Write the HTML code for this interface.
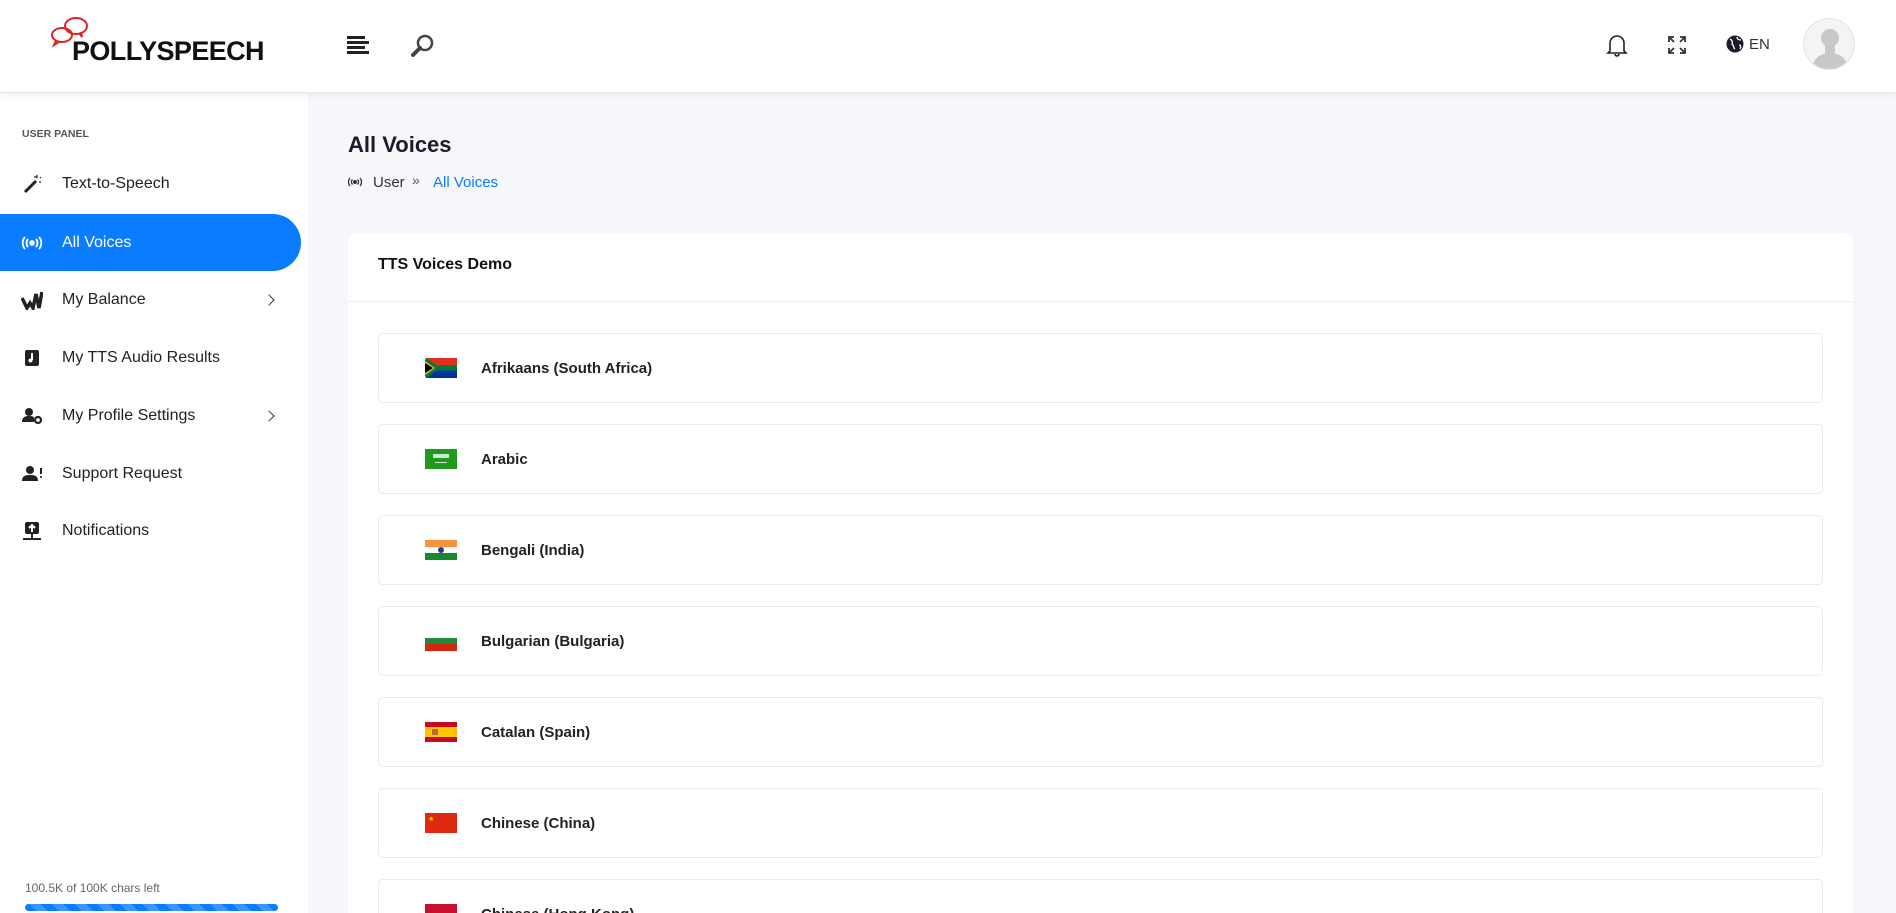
<!DOCTYPE html>
<html style="width:1896px;height:913px;overflow:hidden"><head><meta charset="utf-8"><style>
*{box-sizing:border-box;margin:0;padding:0}
body{width:1896px;height:913px;overflow:hidden;background:#f5f7fa;font-family:"Liberation Sans",sans-serif;color:#1b1b29;position:relative}
.hdr{position:absolute;left:0;top:0;width:1896px;height:92px;background:#fff;box-shadow:0 2px 6px rgba(0,0,0,.08);z-index:2}
.side{position:absolute;left:0;top:92px;width:308px;height:821px;background:#fff;border-top:1px solid #eee}
.abs{position:absolute}
.mi{position:absolute;left:0;width:301px;height:57px;display:flex;align-items:center;font-size:16px;color:#222}
.mi .ic{width:62px;display:flex;justify-content:center;padding-left:2px}
.mi.act{background:#0a7cff;color:#fff;border-radius:0 29px 29px 0}
.chev{position:absolute;right:28px;top:25px;width:8px;height:8px;border-right:1.6px solid #333;border-top:1.6px solid #333;transform:rotate(45deg)}
.card{position:absolute;left:348px;top:233px;width:1505px;height:680px;background:#fff;border-radius:8px 8px 0 0;overflow:hidden}
.it{position:absolute;left:30px;width:1445px;height:70px;border:1px solid #e8eaee;border-radius:5px;display:flex;align-items:center}
.it .fl{position:absolute;left:46px;top:24px;width:32px;height:20px;overflow:hidden}
.it span{position:absolute;left:102px;font-size:15px;font-weight:bold;color:#222}
</style></head><body>
<div class="hdr">
 <svg class="abs" style="left:50px;top:15px" width="40" height="34" viewBox="0 0 40 34" fill="none" stroke="#e02424" stroke-width="2"><ellipse cx="26" cy="11" rx="11" ry="8"/><path d="M29 18l3 4-1-5"/><ellipse cx="12" cy="20" rx="10" ry="7"/><path d="M6 26l-2 4 5-3"/></svg>
 <div class="abs" style="left:72px;top:36px;font-size:27px;font-weight:bold;letter-spacing:-0.6px;color:#111">POLLYSPEECH</div>
 <svg class="abs" style="left:347px;top:36px" width="22" height="18"><rect x="0" y="0" width="18" height="3" fill="#222"/><rect x="0" y="5" width="22" height="3" fill="#222"/><rect x="0" y="10" width="18" height="3" fill="#222"/><rect x="0" y="15" width="22" height="3" fill="#222"/></svg>
 <svg class="abs" style="left:410px;top:34px" width="24" height="24"><circle cx="15" cy="9" r="7" fill="none" stroke="#444" stroke-width="2.5"/><path d="M10 14L3 21" stroke="#444" stroke-width="4" stroke-linecap="round"/></svg>
 <svg class="abs" style="left:1606px;top:33px" width="22" height="24" fill="none" stroke="#222" stroke-width="1.6"><path d="M4 18V10a7 7 0 0 1 14 0v8l2 2H2z"/><path d="M9 21a2 2 0 0 0 4 0"/></svg>
 <svg class="abs" style="left:1667px;top:35px" width="20" height="20" fill="none" stroke="#333" stroke-width="1.8"><path d="M2 7V2h5M2 2l5 5M18 7V2h-5M18 2l-5 5M2 13v5h5M2 18l5-5M18 13v5h-5M18 18l-5-5"/></svg>
 <svg class="abs" style="left:1726px;top:35px" width="18" height="18"><circle cx="9" cy="9" r="8.5" fill="#1b1b29"/><path d="M4 4c2 1 3 3 2 5 2 1 1 4 3 5M11 2c0 2 2 3 4 3M13 10c2 0 2 2 1 4" stroke="#fff" stroke-width="1.3" fill="none"/></svg>
 <div class="abs" style="left:1749px;top:36px;font-size:15px;color:#333">EN</div>
 <div class="abs" style="left:1803px;top:18px;width:52px;height:52px;border-radius:50%;background:#f4f4f4;border:1px solid #e4e4e4;overflow:hidden"><svg width="52" height="52"><circle cx="26" cy="19" r="9" fill="#c6c8ca"/><path d="M8 52c0-12 8-18 18-18s18 6 18 18z" fill="#c6c8ca"/><rect x="21" y="24" width="10" height="12" fill="#c6c8ca"/></svg></div>
</div>
<div class="side">
 <div class="abs" style="left:22px;top:35px;font-size:10.5px;font-weight:bold;color:#555">USER PANEL</div>
 <div class="mi" style="top:62px"><div class="ic"><svg width="20" height="20"><path d="M3 18L14 7" stroke="#222" stroke-width="3"/><path d="M15 1v3M12 3h3M18 4l1-1M17 8h2" stroke="#222" stroke-width="1.2"/></svg></div>Text-to-Speech</div>
 <div class="mi act" style="top:121px"><div class="ic"><svg width="22" height="14" fill="none" stroke="#fff" stroke-width="1.8"><circle cx="11" cy="7" r="2" fill="#fff"/><path d="M7 3a6 6 0 0 0 0 8M15 3a6 6 0 0 1 0 8M4 1a9 9 0 0 0 0 12M18 1a9 9 0 0 1 0 12"/></svg></div>All Voices</div>
 <div class="mi" style="top:178px"><div class="ic"><svg width="22" height="20"><path d="M1 8l5 10 3-5 3 5 3-14 3 14 3-16" stroke="#222" stroke-width="3.5" fill="none"/></svg></div>My Balance<div class="chev"></div></div>
 <div class="mi" style="top:236px"><div class="ic"><svg width="16" height="18"><rect x="1" y="1" width="14" height="16" rx="2" fill="#222"/><path d="M8 4v7" stroke="#fff" stroke-width="2"/><circle cx="6.5" cy="11.5" r="2" fill="#fff"/></svg></div>My TTS Audio Results</div>
 <div class="mi" style="top:294px"><div class="ic"><svg width="22" height="18"><circle cx="8" cy="5" r="4" fill="#222"/><path d="M1 15c0-5 3-6 7-6s5 1 5 2v4z" fill="#222"/><circle cx="17" cy="13" r="3" fill="none" stroke="#222" stroke-width="2.2"/></svg></div>My Profile Settings<div class="chev"></div></div>
 <div class="mi" style="top:352px"><div class="ic"><svg width="22" height="16"><circle cx="9" cy="4" r="4" fill="#222"/><path d="M1 15c0-5 3-6 8-6s8 1 8 6z" fill="#222"/><path d="M20 2v6" stroke="#222" stroke-width="2"/><circle cx="20" cy="11" r="1" fill="#222"/></svg></div>Support Request</div>
 <div class="mi" style="top:409px"><div class="ic"><svg width="20" height="20"><rect x="3" y="1" width="14" height="12" rx="2" fill="#222"/><path d="M10 11V4M7 7l3-3 3 3" stroke="#fff" stroke-width="2" fill="none"/><path d="M10 13v4M1 18h18" stroke="#222" stroke-width="2"/></svg></div>Notifications</div>
 <div class="abs" style="left:25px;top:788px;font-size:12px;color:#666">100.5K of 100K chars left</div>
 <div class="abs" style="left:25px;top:811px;width:253px;height:7px;border-radius:4px;background:repeating-linear-gradient(45deg,#0a7cff 0 8px,#3a96ff 8px 16px)"></div>
</div>
<div class="abs" style="left:348px;top:132px;font-size:22px;font-weight:bold;color:#1b1b29">All Voices</div>
<svg class="abs" style="left:348px;top:177px" width="14" height="10" fill="none" stroke="#333" stroke-width="1.3"><circle cx="7" cy="5" r="1.3" fill="#333"/><path d="M4.5 2.5a3.5 3.5 0 0 0 0 5M9.5 2.5a3.5 3.5 0 0 1 0 5M2 1a6 6 0 0 0 0 8M12 1a6 6 0 0 1 0 8"/></svg>
<div class="abs" style="left:373px;top:174px;font-size:15px;color:#333">User</div>
<div class="abs" style="left:412px;top:172px;font-size:14px;color:#555">»</div>
<div class="abs" style="left:433px;top:174px;font-size:15px;color:#0a7cff">All Voices</div>
<div class="card">
 <div class="abs" style="left:30px;top:23px;font-size:16px;font-weight:bold;color:#111">TTS Voices Demo</div>
 <div class="abs" style="left:0;top:68px;width:1505px;height:1px;background:#eceef1"></div>
 <div class="it" style="top:100px"><div class="fl"><svg width="32" height="20"><rect width="32" height="10" fill="#e0301e"/><rect y="10" width="32" height="10" fill="#0033a0"/><path d="M0 0L14 10 0 20" fill="#fff"/><path d="M0 2L11 10 0 18M11 10H32" stroke="#007a3d" stroke-width="5" fill="none"/><path d="M0 3L10 10 0 17z" fill="#ffb612"/><path d="M0 5L8 10 0 15z" fill="#000"/></svg></div><span>Afrikaans (South Africa)</span></div>
 <div class="it" style="top:191px"><div class="fl" style="background:#1e9b1e"><div style="position:absolute;left:8px;top:5px;width:16px;height:4px;background:#cfe8cf"></div><div style="position:absolute;left:10px;top:13px;width:12px;height:1px;background:#cfe8cf"></div></div><span>Arabic</span></div>
 <div class="it" style="top:282px"><div class="fl"><div style="height:7px;background:#f7933c"></div><div style="height:6px;background:#fff;position:relative"><div style="position:absolute;left:13px;top:0;width:6px;height:6px;border-radius:50%;background:#233a8c"></div></div><div style="height:7px;background:#148a2c"></div></div><span>Bengali (India)</span></div>
 <div class="it" style="top:373px"><div class="fl"><div style="height:7px;background:#fff"></div><div style="height:6px;background:#1e8a3a"></div><div style="height:7px;background:#d62612"></div></div><span>Bulgarian (Bulgaria)</span></div>
 <div class="it" style="top:464px"><div class="fl"><div style="height:5px;background:#c60b1e"></div><div style="height:10px;background:#ffc400;position:relative"><div style="position:absolute;left:7px;top:2px;width:6px;height:6px;background:#b46a3a"></div></div><div style="height:5px;background:#c60b1e"></div></div><span>Catalan (Spain)</span></div>
 <div class="it" style="top:555px"><div class="fl" style="background:#de2910"><div style="position:absolute;left:3px;top:2px;color:#ffde00;font-size:7px">★</div></div><span>Chinese (China)</span></div>
 <div class="it" style="top:646px"><div class="fl" style="background:#c8102e"></div><span>Chinese (Hong Kong)</span></div>
</div>
</body></html>
